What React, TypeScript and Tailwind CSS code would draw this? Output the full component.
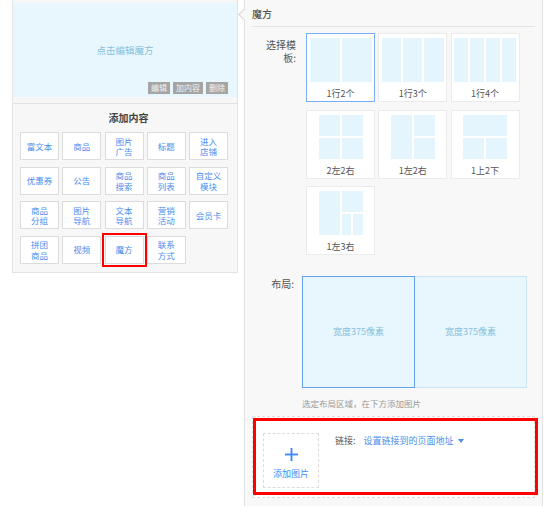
import React from 'react'

const tools = [
  ['富文本'], ['商品'], ['图片', '广告'], ['标题'], ['进入', '店铺'],
  ['优惠券'], ['公告'], ['商品', '搜索'], ['商品', '列表'], ['自定义', '模块'],
  ['商品', '分组'], ['图片', '导航'], ['文本', '导航'], ['营销', '活动'], ['会员卡'],
  ['拼团', '商品'], ['视频'], ['魔方'], ['联系', '方式'],
]

const templates = [
  { label: '1行2个', kind: 'r2' },
  { label: '1行3个', kind: 'r3' },
  { label: '1行4个', kind: 'r4' },
  { label: '2左2右', kind: 'g22' },
  { label: '1左2右', kind: 'l12' },
  { label: '1上2下', kind: 't12' },
  { label: '1左3右', kind: 'l13' },
]

function Cell({ className = '' }: { className?: string }) {
  return <div className={`bg-[#e5f5fd] ${className}`} />
}

function Preview({ kind }: { kind: string }) {
  if (kind === 'r2' || kind === 'r3' || kind === 'r4') {
    const n = kind === 'r2' ? 2 : kind === 'r3' ? 3 : 4
    return (
      <div className="mx-auto mt-[4px] flex h-[44px] w-[62px] gap-[2px]">
        {Array.from({ length: n }).map((_, i) => (
          <Cell key={i} className="flex-1" />
        ))}
      </div>
    )
  }
  if (kind === 'g22') {
    return (
      <div className="mx-auto mt-[4px] grid h-[44px] w-[44px] grid-cols-2 grid-rows-2 gap-[2px]">
        <Cell />
        <Cell />
        <Cell />
        <Cell />
      </div>
    )
  }
  if (kind === 'l12') {
    return (
      <div className="mx-auto mt-[4px] flex h-[44px] w-[44px] gap-[2px]">
        <Cell className="flex-1" />
        <div className="flex flex-1 flex-col gap-[2px]">
          <Cell className="flex-1" />
          <Cell className="flex-1" />
        </div>
      </div>
    )
  }
  if (kind === 't12') {
    return (
      <div className="mx-auto mt-[4px] flex h-[44px] w-[44px] flex-col gap-[2px]">
        <Cell className="flex-1" />
        <div className="flex flex-1 gap-[2px]">
          <Cell className="flex-1" />
          <Cell className="flex-1" />
        </div>
      </div>
    )
  }
  return (
    <div className="mx-auto mt-[4px] flex h-[44px] w-[44px] gap-[2px]">
      <Cell className="flex-1" />
      <div className="flex flex-1 flex-col gap-[2px]">
        <Cell className="flex-1" />
        <div className="flex flex-1 gap-[2px]">
          <Cell className="flex-1" />
          <Cell className="flex-1" />
        </div>
      </div>
    </div>
  )
}

export default function App() {
  return (
    <div className="flex h-[506px] w-[553px] overflow-hidden bg-white font-['Noto_Sans_CJK_SC','Noto_Sans',sans-serif] text-[#333]">
      {/* left column */}
      <div className="ml-[12px] w-[226px] shrink-0">
        <div className="border-x border-b border-[#e3e3e3] bg-[#f7f7f7] pb-[6px] pt-[3px]">
          <div className="relative flex h-[94px] items-center justify-center bg-[#e8f6fd]">
            <span className="text-[9.5px] text-[#86bfdc]">点击编辑魔方</span>
            <div className="absolute bottom-[3px] right-[9px] flex gap-[3px] text-[8px] leading-[12px] text-[#f2f2f2]">
              <span className="bg-[#a5a5a5] px-[3px]">编辑</span>
              <span className="bg-[#a5a5a5] px-[3px]">加内容</span>
              <span className="bg-[#a5a5a5] px-[3px]">删除</span>
            </div>
          </div>
        </div>
        <div className="border-x border-b border-[#e3e3e3] bg-[#f7f7f7] pb-[8px] pl-[7px] pt-[8px]">
          <div className="text-center text-[10px] font-bold leading-[12px] text-[#444]">添加内容</div>
          <div className="mt-[8px] grid grid-cols-[repeat(5,39px)] gap-x-[3.25px] gap-y-[6.5px]">
            {tools.map((t, i) => (
              <div
                key={i}
                className={`flex h-[28px] flex-col items-center justify-center border border-[#dcdcdc] bg-white text-[8.5px] leading-[10.5px] text-[#4b8ef0] ${
                  t[0] === '魔方' ? 'outline-[2.5px] outline-offset-[1px] outline-[#f00] outline-solid' : ''
                }`}
              >
                {t.map((l) => (
                  <span key={l}>{l}</span>
                ))}
              </div>
            ))}
          </div>
        </div>
      </div>

      {/* right panel */}
      <div className="relative ml-[6px] h-[506px] w-[299px] shrink-0 border-x border-[#e3e3e3] bg-[#f8f8f8] px-[7px]">
        <div className="absolute left-[-5px] top-[10px] h-[9px] w-[9px] rotate-45 border-b border-l border-[#d6d6d6] bg-[#f8f8f8]" />
        <div className="flex h-[27px] items-center border-b border-[#e3e3e3] text-[10px] text-[#333]">魔方</div>

        <div className="mt-[6px] flex">
          <div className="w-[44px] pt-[5px] text-right text-[10px] leading-[13px] text-[#555]">
            <div className="ml-auto w-[31px]">选择模板:</div>
          </div>
          <div className="ml-[10px] grid grid-cols-[repeat(3,69px)] gap-x-[3.25px] gap-y-[7.5px]">
            {templates.map((t, i) => (
              <div
                key={t.kind}
                className={`h-[69px] bg-white ${i === 0 ? 'border border-[#7aaef5]' : 'border border-[#ebebeb]'}`}
              >
                <Preview kind={t.kind} />
                <div className="mt-[6px] text-center text-[9px] leading-[12px] text-[#555]">{t.label}</div>
              </div>
            ))}
          </div>
        </div>

        <div className="mt-[21px] flex">
          <div className="w-[42px] pt-[1px] text-right text-[10px] leading-[13px] text-[#555]">布局:</div>
          <div>
            <div className="ml-[8px] flex h-[112px] w-[225px]">
              <div className="flex flex-1 items-center justify-center border border-[#64a2f6] bg-[#e8f6fd] text-[9px] text-[#86bfdc]">
                宽度375像素
              </div>
              <div className="flex flex-1 items-center justify-center border border-l-0 border-[#c9e5f8] bg-[#e8f6fd] text-[9px] text-[#86bfdc]">
                宽度375像素
              </div>
            </div>
            <div className="ml-[8px] mt-[9px] text-[8.5px] leading-[12px] text-[#999]">选定布局区域，在下方添加图片</div>
          </div>
        </div>

        <div className="relative mt-[7px] flex h-[82px] w-[283px] border border-dashed border-[#dcdcdc] bg-white pl-[10px] pt-[16px]">
          <div className="flex h-[55px] w-[56px] flex-col items-center border border-dashed border-[#dcdcdc] text-[#3d8af7]">
            <svg className="mt-[14px] h-[13px] w-[13px]" viewBox="0 0 14 14" fill="none" stroke="currentColor" strokeWidth={2}>
              <line x1="7" y1="0" x2="7" y2="14" />
              <line x1="0" y1="7" x2="14" y2="7" />
            </svg>
            <span className="mt-[7px] text-[9px] leading-[12px]">添加图片</span>
          </div>
          <div className="ml-[16px] mt-[2px] flex h-[12px] items-center text-[9px] leading-[12px]">
            <span className="text-[#555]">链接:</span>
            <span className="ml-[8px] text-[#4b8ef0]">设置链接到的页面地址</span>
            <svg className="ml-[4px] h-[4px] w-[6px] text-[#4b8ef0]" viewBox="0 0 6 4" fill="currentColor">
              <polygon points="0,0 6,0 3,4" />
            </svg>
          </div>
          <div className="pointer-events-none absolute left-[0px] top-[1px] h-[77px] w-[285px] border-[3px] border-[#f00]" />
        </div>
      </div>
    </div>
  )
}
